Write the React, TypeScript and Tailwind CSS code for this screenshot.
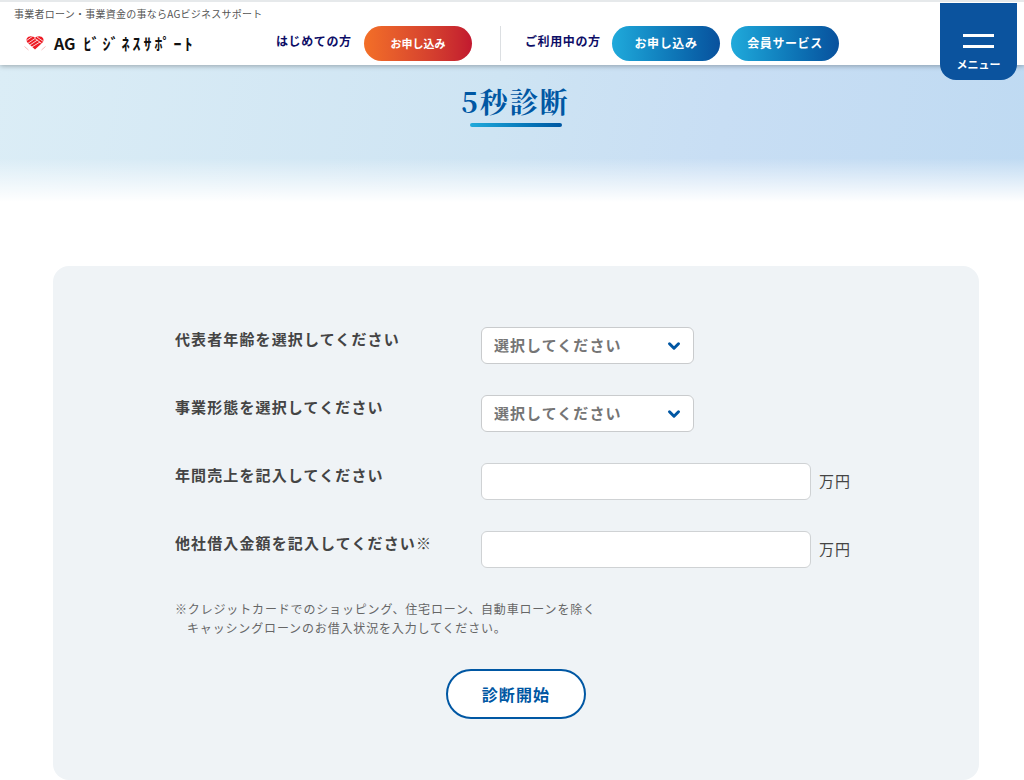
import type { ReactNode } from "react"
import { ChevronDown } from "lucide-react"

const HeartLogo = () => {
  return (
    <svg width="22" height="18" viewBox="0 0 22 18" fill="none" aria-hidden="true" className="shrink-0">
      <defs>
        <clipPath id="heart">
          <path d="M11 15.5 L3.4 8.6 C1.6 6.4 2.4 2.6 6 2.4 C8.6 2.2 10.2 3 11 4 C11.8 3 13.4 2.2 16 2.4 C19.6 2.6 20.4 6.4 18.6 8.6 Z" />
        </clipPath>
      </defs>
      <g clipPath="url(#heart)">
        <rect width="22" height="18" fill="#ee1c25" />
        <path
          d="M2 7 L9 2 M3 10 L11 4.5 M11 4.5 L19 10.5 M4.5 12 L13.5 6 M7 13.5 L16 8 M13 3 L20 8"
          stroke="#fff"
          strokeWidth="0.8"
        />
      </g>
      <path d="M0.5 12.5 L4.5 16 M21.5 12.5 L17.5 16" stroke="#f7b9bb" strokeWidth="1" />
    </svg>
  )
}

const Header = () => {
  return (
    <header className="relative z-10 h-[65px] border-t-2 border-[#e6e9eb] bg-white shadow-[0_1px_5px_rgba(0,0,0,0.3)]">
      <p className="pl-[14px] pt-1 text-[10px] leading-4 tracking-wide text-[#555]">
        事業者ローン・事業資金の事ならAGビジネスサポート
      </p>
      <div className="flex h-[42px] items-center pl-6">
        <a href="#" className="flex w-[252px] items-center gap-2 text-[#111]">
          <HeartLogo />
          <span className="flex items-center gap-2 whitespace-nowrap text-base font-bold">
            <span>AG</span>
            <span className="tracking-[3px]">ﾋﾞｼﾞﾈｽｻﾎﾟｰﾄ</span>
          </span>
        </a>
        <span className="w-[88px] shrink-0 pb-1 text-xs font-bold tracking-wider text-[#0d0d66]">はじめての方</span>
        <a
          href="#"
          className="flex h-[35px] w-[108px] shrink-0 items-center justify-center rounded-full bg-gradient-to-r from-[#f36f27] to-[#c2182f] text-[11px] font-bold text-white"
        >
          お申し込み
        </a>
        <span className="ml-7 mr-6 h-[35px] w-px shrink-0 bg-[#dcdfe2]" />
        <span className="w-[87px] shrink-0 pb-1 text-xs font-bold tracking-wider text-[#0d0d66]">ご利用中の方</span>
        <div className="flex shrink-0 gap-[11px]">
          <a
            href="#"
            className="flex h-[35px] w-[108px] items-center justify-center rounded-full bg-gradient-to-r from-[#20aadb] to-[#09519d] text-xs font-bold tracking-wider text-white"
          >
            お申し込み
          </a>
          <a
            href="#"
            className="flex h-[35px] w-[108px] items-center justify-center rounded-full bg-gradient-to-r from-[#20aadb] to-[#09519d] text-xs font-bold tracking-wider text-white"
          >
            会員サービス
          </a>
        </div>
      </div>
      <button className="absolute right-[7px] top-px flex h-[77px] w-[77px] flex-col items-center rounded-b-2xl bg-[#0b539e] pt-[31px] text-white">
        <span className="mb-2 h-[3px] w-[31px] bg-white" />
        <span className="h-[3px] w-[31px] bg-white" />
        <span className="mt-2 text-[11px] font-bold leading-4">メニュー</span>
      </button>
    </header>
  )
}

const Row = ({ id, label, children }: { id: string; label: string; children: ReactNode }) => {
  return (
    <div className="grid grid-cols-[306px_1fr]">
      <label htmlFor={id} className="text-[15px] font-bold leading-6">
        {label}
      </label>
      <div className="flex items-center gap-2">{children}</div>
    </div>
  )
}

const SelectBox = ({ id, options }: { id: string; options: string[] }) => {
  return (
    <div className="relative">
      <select
        id={id}
        className="h-[37px] w-[213px] appearance-none rounded-md border border-[#c9cbcd] bg-white pl-3 text-[15px] font-bold tracking-[0.07em] text-[#757575]"
      >
        <option>選択してください</option>
        {options.map((option) => (
          <option key={option}>{option}</option>
        ))}
      </select>
      <ChevronDown
        size={18}
        strokeWidth={4}
        className="pointer-events-none absolute right-[11px] top-[10px] text-[#0057a3]"
      />
    </div>
  )
}

const AmountBox = ({ id }: { id: string }) => {
  return (
    <>
      <input
        id={id}
        type="text"
        inputMode="numeric"
        className="h-[37px] w-[330px] rounded-md border border-[#cfd2d4] bg-white px-3 text-[15px]"
      />
      <span className="text-[15px]">万円</span>
    </>
  )
}

const App = () => {
  return (
    <div className="bg-white font-['Noto_Sans_CJK_JP',sans-serif] text-[#444]">
      <Header />
      <main>
        <section className="h-[137px] bg-[linear-gradient(to_bottom,transparent_68%,white),linear-gradient(100deg,#dbedf6,#cee4f3_48%,#c8def4_70%,#bfdaf2)] pl-[7px] pt-4">
          <div className="flex flex-col items-center">
            <h1 className="font-['Noto_Serif_CJK_JP','Noto_Sans_CJK_JP',serif] text-[28px] font-bold leading-10 tracking-[2px] text-[#0057a3]">
              5秒診断
            </h1>
            <span className="mt-0.5 h-1 w-[92px] rounded-full bg-gradient-to-r from-[#20aadb] to-[#0057a3]" />
          </div>
        </section>
        <div className="pl-[53px] pr-[45px] pt-16">
          <form className="rounded-2xl bg-[#eff3f6] pb-[61px] pt-[61px] tracking-[0.07em]">
            <div className="flex flex-col gap-[31px] pl-[122px]">
              <Row id="age" label="代表者年齢を選択してください">
                <SelectBox id="age" options={["20歳〜69歳", "70歳以上"]} />
              </Row>
              <Row id="business" label="事業形態を選択してください">
                <SelectBox id="business" options={["法人", "個人事業主"]} />
              </Row>
              <Row id="sales" label="年間売上を記入してください">
                <AmountBox id="sales" />
              </Row>
              <Row id="debt" label="他社借入金額を記入してください※">
                <AmountBox id="debt" />
              </Row>
              <p className="pl-[1em] -indent-[1em] text-xs leading-[19px] tracking-[0.07em] text-[#666]">
                ※クレジットカードでのショッピング、住宅ローン、自動車ローンを除く
                <br />
                <span className="inline-block indent-0">キャッシングローンのお借入状況を入力してください。</span>
              </p>
            </div>
            <button
              type="button"
              className="mx-auto mt-8 block h-[50px] w-[140px] rounded-full border-2 border-[#0057a3] bg-white text-base font-bold tracking-[0.07em] text-[#0057a3]"
            >
              診断開始
            </button>
          </form>
        </div>
      </main>
    </div>
  )
}

export default App
